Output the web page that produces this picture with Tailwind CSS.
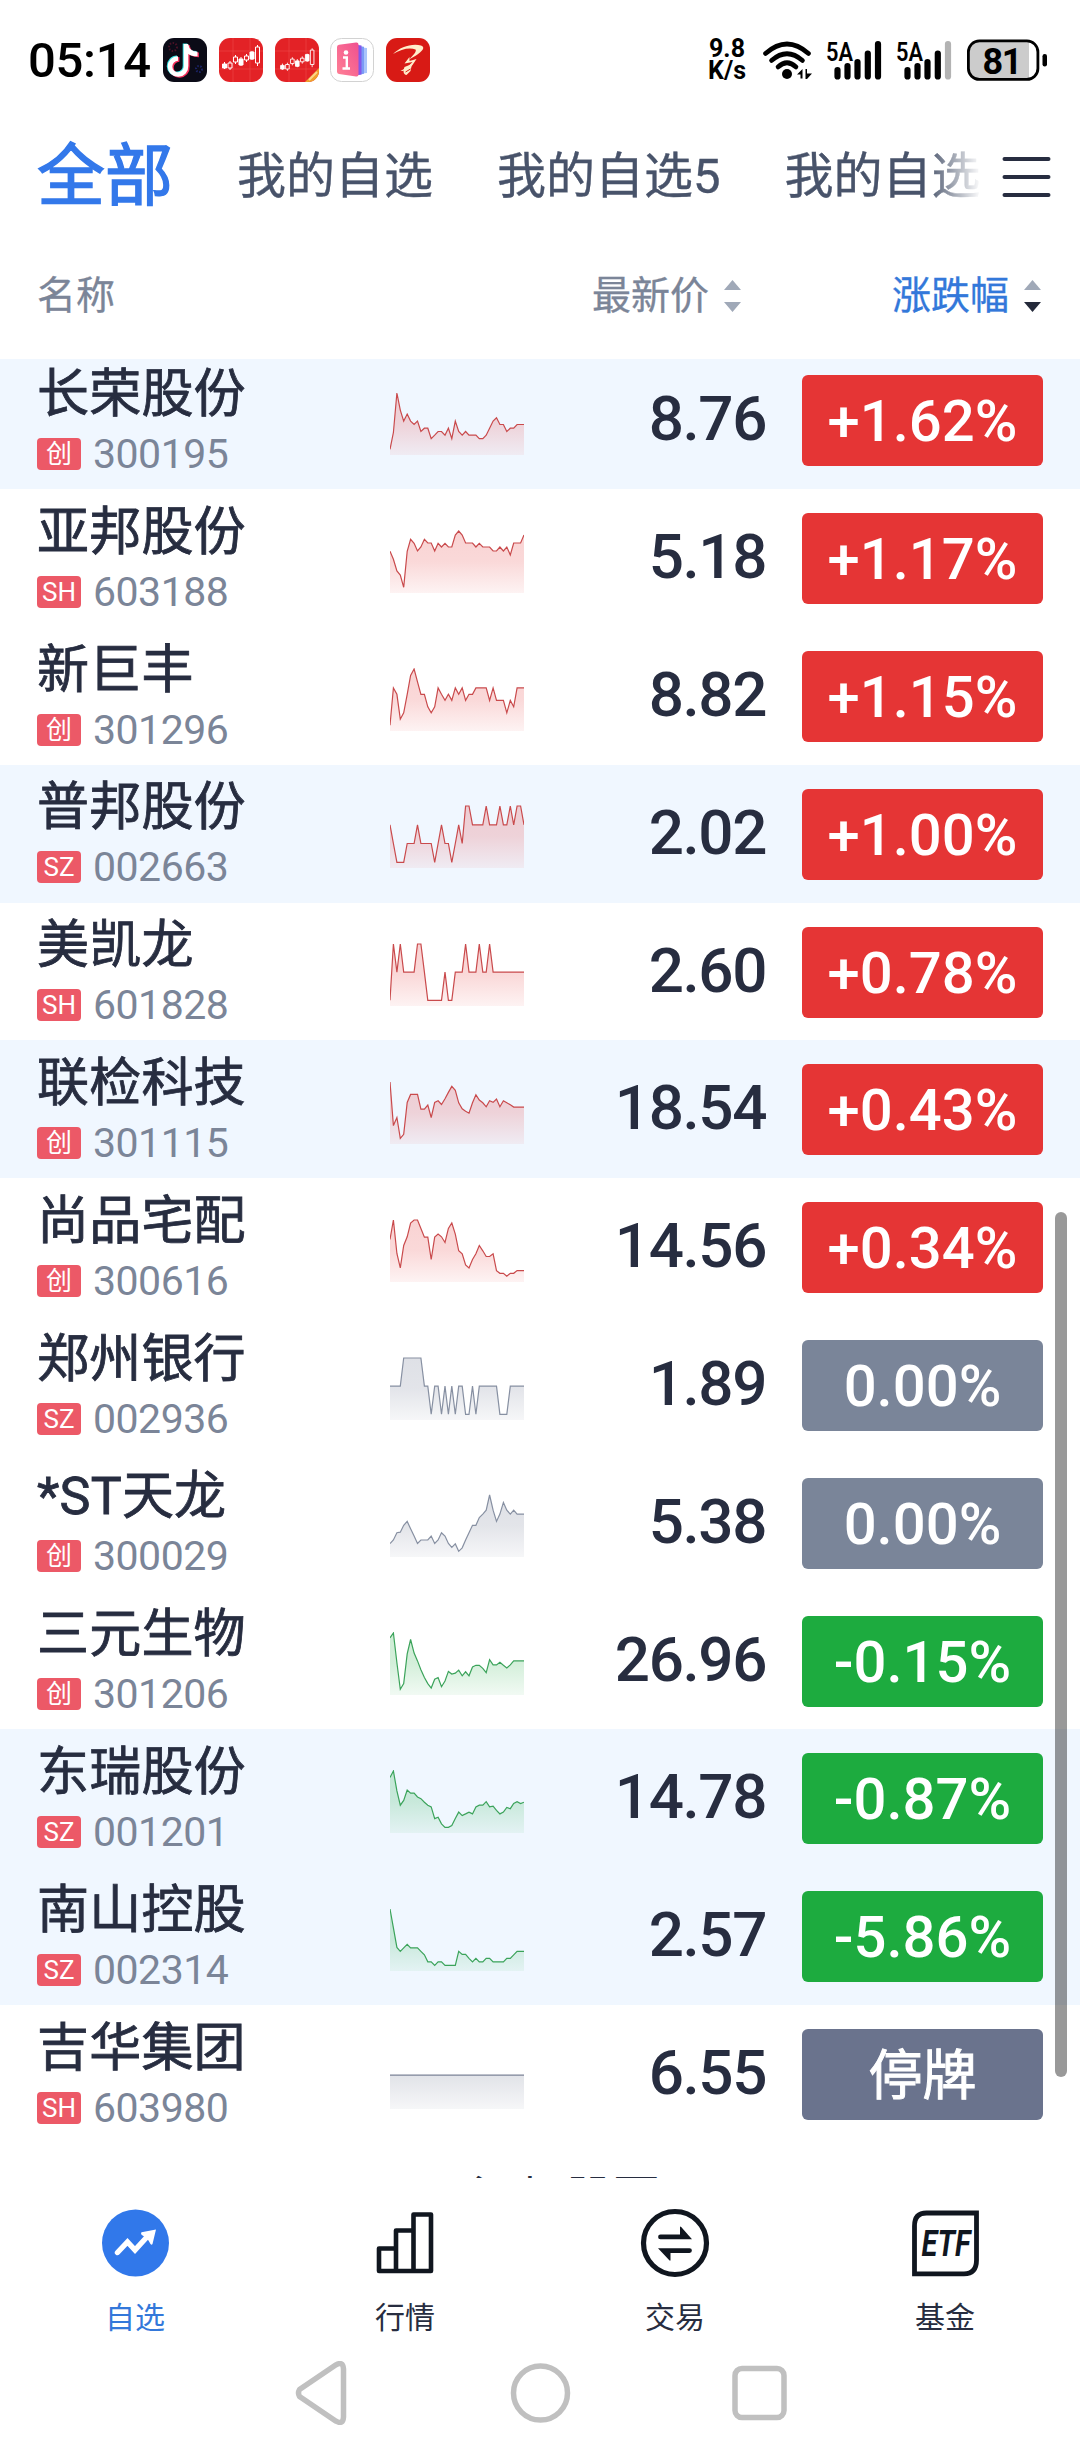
<!DOCTYPE html>
<html lang="zh-CN">
<head>
    <meta charset="UTF-8">
    <meta name="viewport" content="width=device-width, initial-scale=1.0">
    <title>自选</title>
    <script src="https://cdn.jsdelivr.net/npm/@tailwindcss/browser@4"></script>
</head>
<body class="bg-white font-['Roboto','Noto_Sans_CJK_SC',sans-serif] text-[#272d40]">
    <div class="w-[1080px] h-[2440px] flex flex-col overflow-hidden">

        <!-- status bar -->
        <div class="h-[120px] shrink-0 flex items-center justify-between pl-[28px] pr-[33px] text-black">
            <div class="flex items-center">
                <span class="w-[135px] text-[49px] leading-none font-medium tracking-[-0.3px]">05:14</span>
                <div class="flex items-center gap-3">
                    <svg class="w-11 h-11" viewBox="0 0 44 44">
                        <rect width="44" height="44" rx="11" fill="#0b0b17"/>
                        <circle cx="10" cy="9" r="4" fill="none" stroke="#4a1226" stroke-width="2" stroke-dasharray="1.5 1.5"/>
                        <circle cx="36" cy="31" r="3" fill="none" stroke="#1c2468" stroke-width="2" stroke-dasharray="1.5 1.5"/>
                        <g fill="none" stroke-width="4.600">
                            <path d="M23 6v22a8 8 0 1 1-8-7.500M23 7c1 6 5 9 11.500 9" stroke="#35e0e0" transform="translate(-1 -.6)"/>
                            <path d="M23 6v22a8 8 0 1 1-8-7.500M23 7c1 6 5 9 11.500 9" stroke="#f5305c" transform="translate(1.400 .9)"/>
                            <path d="M23 6v22a8 8 0 1 1-8-7.500M23 7c1 6 5 9 11.500 9" stroke="#fff"/>
                        </g>
                    </svg>
                    <svg class="w-11 h-11" viewBox="0 0 44 44">
                        <rect width="44" height="44" rx="11" fill="#e32226"/>
                        <path d="M14 0v44M31 0v44M0 13h44M0 31h44" stroke="#ee4a4a" stroke-width=".6"/>
                        <g fill="#fff" stroke="#fff" stroke-width="1">
                            <path d="M5.500 24v7M11 23v9M16.500 17v9M22 19v9M27.500 16v8M33 13v9M38.500 7v21" />
                            <path d="M3.500 26h4v4h-4zM20 21h4v6h-4zM31 14h4v7h-4z"/>
                            <path d="M9 25h4v5H9zM14.500 19h4v5h-4zM25.500 18h4v4h-4zM36.500 9h4v16h-4z" fill="#e32226"/>
                        </g>
                    </svg>
                    <svg class="w-11 h-11" viewBox="0 0 44 44">
                        <defs><clipPath id="appClip"><rect width="44" height="44" rx="11"/></clipPath></defs>
                        <g clip-path="url(#appClip)">
                            <rect width="44" height="44" fill="#e32226"/>
                            <path d="M14 0v44M31 0v44M0 13h44M0 31h44" stroke="#ee4a4a" stroke-width=".6"/>
                            <path d="M30 44L44 30v14z" fill="#f0a12c"/>
                            <path d="M34 42l8-8" stroke="#fbd58a" stroke-width="2"/>
                        </g>
                        <g fill="#fff" stroke="#fff" stroke-width="1" transform="translate(2.500 4) scale(.9)">
                            <path d="M5.500 24v7M11 23v9M16.500 17v9M22 19v9M27.500 16v8M33 13v9M38.500 7v21" />
                            <path d="M3.500 26h4v4h-4zM20 21h4v6h-4zM31 14h4v7h-4z"/>
                            <path d="M9 25h4v5H9zM14.500 19h4v5h-4zM25.500 18h4v4h-4zM36.500 9h4v16h-4z" fill="#e32226"/>
                        </g>
                    </svg>
                    <svg class="w-11 h-11 -ml-px" viewBox="0 0 44 44">
                        <defs>
                            <linearGradient id="book" x1="0" y1="1" x2="1" y2="0">
                                <stop offset="0" stop-color="#ff8095"/><stop offset="1" stop-color="#f0508f"/>
                            </linearGradient>
                        </defs>
                        <rect x=".5" y=".5" width="43" height="43" rx="11" fill="#fff" stroke="#d2d2d2"/>
                        <path d="M28 9l9 1v25l-9 1z" fill="#a9c4fb"/>
                        <path d="M28 8l6 .7v27L28 37z" fill="#7b9bf5"/>
                        <path d="M28 7l3.500.5v29L28 37z" fill="#8456ea"/>
                        <path d="M7 9q0-2 2-2.300L26 4.500q2.500-.3 2.500 2v30q0 2.500-2.500 2L9 36q-2-.3-2-2.300z" fill="url(#book)"/>
                        <circle cx="16" cy="14.500" r="2.300" fill="#fff"/>
                        <path d="M13 19.500h3.800V30M12.500 30.500h7.500" fill="none" stroke="#fff" stroke-width="2.400"/>
                    </svg>
                    <svg class="w-11 h-11" viewBox="0 0 44 44">
                        <rect width="44" height="44" rx="11" fill="#d81a15"/>
                        <g fill="#ffeecb">
                            <path d="M7 16C14 9 26 5 35 7.500c5 2 1 6-5 10l-7 4c4-4 8-8 6.500-10C24 9 15 11 7 16z"/>
                            <path d="M23.500 19l-5 6.500 8-1.500-5 5-7 4c5 0 9-2.500 12-6l4-6-7 2z"/>
                            <path d="M18.500 29l7.500-3-1.500 7-4 4c-3.500-.5-3.500-4-2-8z"/>
                        </g>
                        <path d="M19.500 34l5-3" stroke="#d81a15" stroke-width="1"/>
                    </svg>
                </div>
            </div>
            <div class="flex items-center">
                <div class="w-[38px] mr-[17px] text-center text-[25px] leading-[22px] font-bold">
                    <p>9.8</p>
                    <p>K/s</p>
                </div>
                <svg class="w-[50px] h-[40px] mr-[13px]" viewBox="0 0 50 40">
                    <g fill="none" stroke="#000" stroke-width="4.600" stroke-linecap="round">
                        <path d="M2.500 13.500q21.500-19 43 0"/>
                        <path d="M8.500 20.500q15.500-13.500 31 0"/>
                        <path d="M15 27q9-8.500 18 0"/>
                    </g>
                    <circle cx="24" cy="34" r="5"/>
                    <path d="M34 34.500l5.500-5.500v9.500h-2v-4zM49 33.500l-5 5.500h-1.500V29h1.500v4.500z"/>
                </svg>
                <svg class="w-[56px] h-[40px] mr-[14px]" viewBox="0 0 56 40">
                    <text x="0" y="20.500" font-size="25.500" font-weight="600" textLength="27" lengthAdjust="spacingAndGlyphs">5A</text>
                    <path d="M11.500 30v6.500M21.500 26v10.500M31.500 22v14.500M41.800 13.500v23M52 4v32.500" stroke="#000" stroke-width="6.200" stroke-linecap="round"/>
                </svg>
                <svg class="w-[56px] h-[40px] mr-[15px]" viewBox="0 0 56 40">
                    <text x="0" y="20.500" font-size="25.500" font-weight="600" textLength="27" lengthAdjust="spacingAndGlyphs">5A</text>
                    <path d="M11.500 30v6.500M21.500 26v10.500M31.500 22v14.500M41.800 13.500v23" stroke="#000" stroke-width="6.200" stroke-linecap="round"/>
                    <path d="M52 4v32.500" stroke="#b3b3b3" stroke-width="6.200" stroke-linecap="round"/>
                </svg>
                <svg class="w-[80px] h-[42px]" viewBox="0 0 80 42">
                    <path d="M12 2h50v38H12A10.500 10.500 0 0 1 2 30V12A10.500 10.500 0 0 1 12 2z" fill="#ccc"/>
                    <rect x="1.400" y="1.900" width="69.500" height="38.500" rx="11" fill="none" stroke="#000" stroke-width="2.800"/>
                    <rect x="75.500" y="15" width="4.500" height="12.500" rx="2.200"/>
                    <text x="35.500" y="34.500" text-anchor="middle" font-size="36" font-weight="700" textLength="40">81</text>
                </svg>
            </div>
        </div>

        <!-- group tabs -->
        <div class="h-[110px] shrink-0 flex items-center pt-[4px] pl-[37px] pr-[29px] justify-between">
            <div class="w-[948px] flex items-center gap-[64px] overflow-hidden whitespace-nowrap text-[49px] leading-[80px] text-[#48536a] [-webkit-text-stroke:0.4px] mask-r-from-[890px] mask-r-to-[944px]">
                <span class="text-[68px] text-[#3378ea] [-webkit-text-stroke:1.4px]">全部</span>
                <span>我的自选</span>
                <span>我的自选5</span>
                <span>我的自选2</span>
            </div>
            <svg class="w-[49px] h-[42px]" viewBox="0 0 49 42">
                <path d="M2.500 3h44M2.500 21h44M2.500 39h44" stroke="#272d40" stroke-width="4" stroke-linecap="round"/>
            </svg>
        </div>

        <!-- column heads -->
        <div class="h-[129px] shrink-0 flex items-center pl-[37px] pr-[38px] text-[39px] leading-none text-[#7b8598] [-webkit-text-stroke:0.3px]">
            <span class="flex-1 pt-[4px]">名称</span>
            <div class="flex items-center gap-[14px] mr-[150px]">
                <span class="pt-[4px]">最新价</span>
                <svg class="w-[19px] h-[34px] mt-[2px]" viewBox="0 0 19 34">
                    <path d="M9.500 1L18 11H1zM9.500 33L18 23H1z" fill="#a0a9b8"/>
                </svg>
            </div>
            <div class="flex items-center gap-[14px]">
                <span class="pt-[4px] text-[#3378da]">涨跌幅</span>
                <svg class="w-[19px] h-[34px] mt-[2px]" viewBox="0 0 19 34">
                    <path d="M9.500 1L18 11H1z" fill="#a0a9b8"/>
                    <path d="M9.500 33L18 23H1z" fill="#242a3a"/>
                </svg>
            </div>
        </div>

        <!-- stock list, scrolled a few pixels under the column heads -->
        <div class="relative h-[1819px] shrink-0 overflow-hidden">
            <div id="stockList" class="-mt-[7.500px]"></div>
            <p class="pt-[32px] text-center text-[47px] leading-none pl-[52px]">添加股票</p>
            <div class="absolute right-[13px] top-[853px] w-[12px] h-[865px] rounded-full bg-black/40"></div>
        </div>

        <!-- bottom tabs -->
        <div class="h-[167px] shrink-0 grid grid-cols-4 pt-[29px] text-[30px] leading-none">
            <div class="flex flex-col items-center gap-[24px] text-[#3378da]">
                <svg class="w-[72px] h-[72px]" viewBox="0 0 72 72">
                    <circle cx="36.500" cy="36" r="33.500" fill="#3178ea"/>
                    <path d="M18.500 45.500l10-10.500 7.500 8 11-12" fill="none" stroke="#fff" stroke-width="5.400" stroke-linecap="round"/>
                    <path d="M42.500 25.300L57 22.500 53.500 37q-.8 1.500-2 0l-2-3.500-4-3.800-3-2q-1-1.500 0-2.400z" fill="#fff"/>
                </svg>
                <span>自选</span>
            </div>
            <div class="flex flex-col items-center gap-[24px]">
                <svg class="w-[72px] h-[72px]" viewBox="0 0 72 72">
                    <path d="M10 41.500h17V64H10zM27 23.500h17.500V64H27zM44.500 7.500H62V64H44.500z" fill="none" stroke="#10161f" stroke-width="4.600" stroke-linejoin="round"/>
                </svg>
                <span>行情</span>
            </div>
            <div class="flex flex-col items-center gap-[24px]">
                <svg class="w-[72px] h-[72px]" viewBox="0 0 72 72">
                    <circle cx="36" cy="36" r="31.500" fill="none" stroke="#10161f" stroke-width="5.200"/>
                    <path d="M21.500 27.500h19.500v-7.500q.3-.8 1.200 0L53 32.300H21.500a2.400 2.400 0 0 1 0-4.800zM50.500 46H31.500v7.300q-.3.800-1.200 0L19 41.200h31.500a2.400 2.400 0 0 1 0 4.800z" fill="#10161f"/>
                </svg>
                <span>交易</span>
            </div>
            <div class="flex flex-col items-center gap-[24px]">
                <svg class="w-[72px] h-[72px]" viewBox="0 0 72 72">
                    <path d="M5.500 66.800V19Q5.500 6 17.500 6H67.500V53Q67.500 66.800 55 66.800z" fill="none" stroke="#10161f" stroke-width="4.800"/>
                    <text x="12.500" y="48.500" font-size="37" font-weight="700" font-style="italic" fill="#10161f" textLength="49" lengthAdjust="spacingAndGlyphs">ETF</text>
                </svg>
                <span>基金</span>
            </div>
        </div>

        <!-- system navigation -->
        <div class="flex-1 flex justify-center pl-[1px]">
            <svg class="w-[492px] h-[64px] mt-[16px]" viewBox="0 0 492 64" fill="none" stroke="#c0c0c0" stroke-width="5.500" stroke-linejoin="round">
                <path d="M4.500 28.500L41 3.800Q48 0 48.500 8V56Q48 64 41 60.200L4.500 35.500Q2.500 32 4.500 28.500z"/>
                <circle cx="245.500" cy="32" r="27"/>
                <rect x="440" y="7.500" width="49" height="49" rx="7"/>
            </svg>
        </div>
    </div>

    <script>
        const styles = {
            up: { badge: 'bg-[#e53535]', line: '#c94a4c', fill: '#e53535' },
            down: { badge: 'bg-[#1dab3f]', line: '#3ba35a', fill: '#1dab3f' },
            flat: { badge: 'bg-[#7a8599]', line: '#8790a2', fill: '#6a738d' },
            halt: { badge: 'bg-[#6a738d]', line: '#7a8296', fill: '#6a738d' },
        };

        // trend: depth of each point below the top edge, any unit, 40 samples
        const stocks = [
            { name: '长荣股份', tag: '创', code: '300195', price: '8.76', change: '+1.62%', kind: 'up', tint: true,
              trend: [235,185,67,118,151,130,151,161,151,182,172,172,203,193,182,182,193,172,203,151,182,193,182,193,193,193,203,203,193,172,151,141,161,161,182,172,172,161,161,161] },
            { name: '亚邦股份', tag: 'SH', code: '603188', price: '5.18', change: '+1.17%', kind: 'up',
              trend: [542,566,601,613,650,542,506,518,541,529,506,517,517,541,518,529,518,529,529,493,481,493,517,517,517,529,518,529,529,529,541,541,529,541,529,553,517,517,517,493] },
            { name: '新巨丰', tag: '创', code: '301296', price: '8.82', change: '+1.15%', kind: 'up',
              trend: [1062,951,970,1044,1025,970,914,895,933,970,970,1007,1025,1007,951,970,988,970,988,951,970,951,988,970,970,951,951,951,951,988,951,988,988,988,1025,988,1007,951,951,951] },
            { name: '普邦股份', tag: 'SZ', code: '002663', price: '2.02', change: '+1.00%', kind: 'up', tint: true,
              trend: [1,2,3,3,3,2,2,2,1,2,2,2,2,3,2,1,2,2,3,2,1,2,0,0,1,1,1,1,0,1,1,1,0,1,1,0,1,0,0,1] },
            { name: '美凯龙', tag: 'SH', code: '601828', price: '2.60', change: '+0.78%', kind: 'up',
              trend: [2,0,1,0,1,1,1,1,0,0,1,2,2,2,2,2,1,2,2,1,1,1,0,1,1,1,0,1,1,0,1,1,1,1,1,1,1,1,1,1] },
            { name: '联检科技', tag: '创', code: '301115', price: '18.54', change: '+0.43%', kind: 'up', tint: true,
              trend: [547,677,653,715,703,608,584,584,584,628,628,616,653,608,603,614,597,578,560,572,609,627,634,640,609,585,601,609,621,603,608,598,621,603,609,615,622,622,622,622] },
            { name: '尚品宅配', tag: '创', code: '300616', price: '14.56', change: '+0.34%', kind: 'up',
              trend: [1016,958,1058,1101,1034,1008,967,958,958,983,1009,1009,1076,1009,1000,1008,1025,983,967,1000,1050,1059,1092,1101,1076,1059,1034,1050,1067,1067,1059,1109,1117,1117,1126,1117,1117,1109,1109,1109] },
            { name: '郑州银行', tag: 'SZ', code: '002936', price: '1.89', change: '0.00%', kind: 'flat',
              trend: [1,1,1,1,0,0,0,0,0,0,1,1,2,1,1,2,1,2,1,2,1,1,2,2,1,2,1,1,1,1,1,1,2,2,2,1,1,1,1,1] },
            { name: '*ST天龙', tag: '创', code: '300029', price: '5.38', change: '0.00%', kind: 'flat',
              trend: [216,208,191,190,174,165,182,199,216,208,208,208,199,216,208,191,199,216,225,217,234,226,208,191,174,174,156,148,139,104,139,165,148,121,139,148,139,148,148,148] },
            { name: '三元生物', tag: '创', code: '301206', price: '26.96', change: '-0.15%', kind: 'down',
              trend: [433,422,490,551,538,470,437,468,486,506,524,538,548,528,524,545,532,510,516,514,507,520,511,520,500,496,496,503,513,483,495,495,489,496,502,495,486,486,486,486] },
            { name: '东瑞股份', tag: 'SZ', code: '001201', price: '14.78', change: '-0.87%', kind: 'down', tint: true,
              trend: [755,740,786,819,808,784,791,791,800,804,812,819,823,850,847,862,870,870,866,850,835,843,839,835,839,823,819,819,811,823,821,831,839,835,824,827,815,811,815,812] },
            { name: '南山控股', tag: 'SZ', code: '002314', price: '2.57', change: '-5.86%', kind: 'down', tint: true,
              trend: [1057,1100,1145,1154,1146,1138,1146,1146,1146,1154,1162,1178,1178,1186,1178,1178,1186,1186,1186,1186,1154,1161,1161,1170,1178,1170,1178,1178,1170,1170,1178,1178,1178,1178,1170,1170,1162,1154,1154,1154] },
            { name: '吉华集团', tag: 'SH', code: '603980', price: '6.55', change: '停牌', kind: 'halt',
              trend: Array(40).fill(0) },
        ];

        function sparkline(stock, id) {
            const { line, fill } = styles[stock.kind];
            const top = Math.min(...stock.trend);
            const range = Math.max(...stock.trend) - top;
            const points = stock.trend.map((v, i) => {
                const y = range ? (v - top) / range * 56.3 : 28.2;
                return (i * 134 / 39).toFixed(1) + ',' + (y + 1).toFixed(1);
            }).join(' ');
            return `
                <svg class="w-[134px] h-[63px] self-start mt-[40.5px] shrink-0" viewBox="0 0 134 63">
                    <defs>
                        <linearGradient id="${id}" gradientUnits="userSpaceOnUse" x1="0" y1="0" x2="0" y2="63">
                            <stop offset="0" stop-color="${fill}" stop-opacity=".22"/>
                            <stop offset=".5" stop-color="${fill}" stop-opacity=".19"/>
                            <stop offset="1" stop-color="${fill}" stop-opacity=".06"/>
                        </linearGradient>
                    </defs>
                    <polygon points="0,63 ${points} 134,63" fill="url(#${id})"/>
                    <polyline points="${points}" fill="none" stroke="${line}" stroke-width="1.2"/>
                </svg>`;
        }

        document.getElementById('stockList').innerHTML = stocks.map((s, i) => `
            <div class="h-[137.8px] flex items-center px-[37px] ${s.tint ? 'bg-[#f0f7ff]' : ''}">
                <div class="w-[353px] self-start pt-[17.5px] flex flex-col gap-[17px]">
                    <span class="text-[52px] leading-[52px] tracking-[0.2px] [-webkit-text-stroke:0.8px]">${s.name}</span>
                    <div class="flex items-center gap-[12px] h-[32px]">
                        <span class="w-[44px] h-[32px] rounded-[4px] bg-[#ec5967] text-white text-[26px] leading-[33px] text-center">${s.tag}</span>
                        <span class="text-[41px] leading-[32px] tracking-[-0.5px] text-[#7b8598]">${s.code}</span>
                    </div>
                </div>
                ${sparkline(s, 'trend' + i)}
                <span class="flex-1 -mt-[2px] pr-[36px] text-right text-[62px] leading-none font-medium tracking-[-1.4px]">${s.price}</span>
                <span class="w-[241px] h-[91px] mt-[1px] rounded-[6px] text-center text-white ${s.kind === 'halt' ? 'text-[54px] leading-[95px] [-webkit-text-stroke:1px]' : 'text-[58px] leading-[93px] font-medium'} ${styles[s.kind].badge}">${s.change}</span>
            </div>`).join('');
    </script>
</body>
</html>
